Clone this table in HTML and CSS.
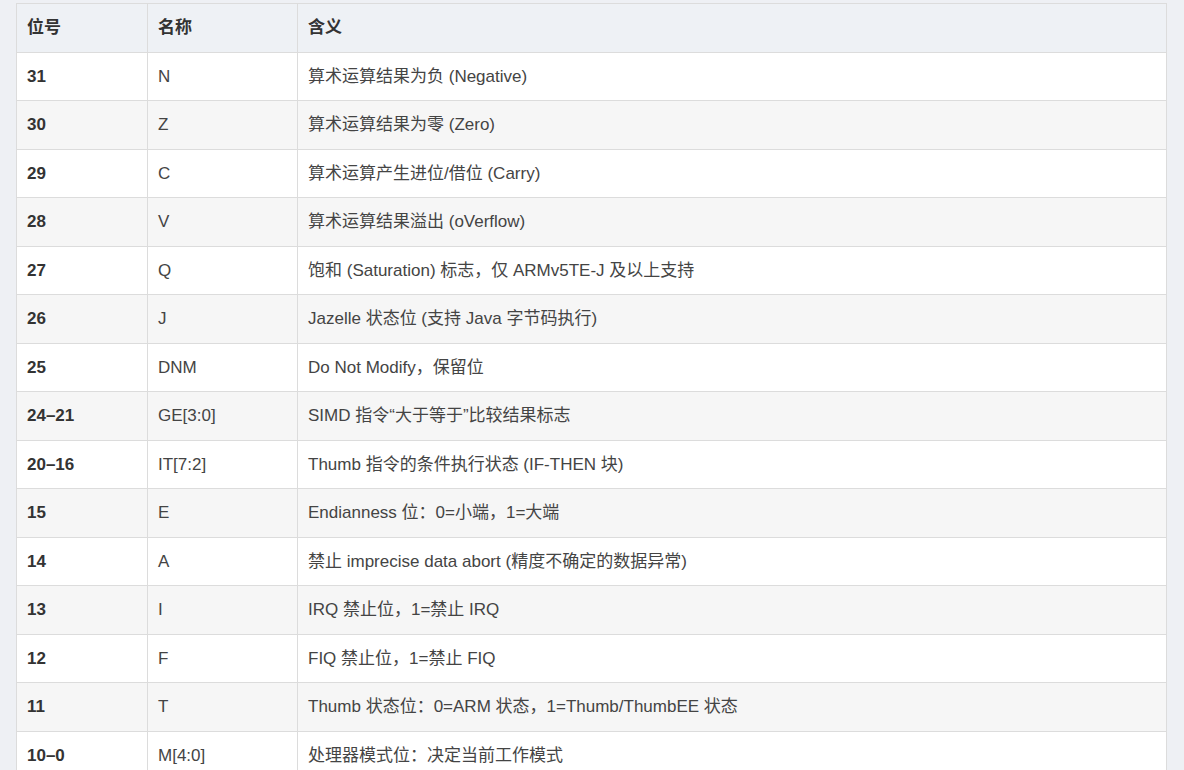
FILE: index.html
```html
<!DOCTYPE html>
<html lang="zh">
<head>
<meta charset="utf-8">
<link rel="stylesheet" href="styles.css">
</head>
<body>
<div class="wrap">
<table class="cpsr">
<thead>
<tr><th class="c1">位号</th><th class="c2">名称</th><th class="c3">含义</th></tr>
</thead>
<tbody>
<tr><td class="bit">31</td><td>N</td><td>算术运算结果为负 (Negative)</td></tr>
<tr><td class="bit">30</td><td>Z</td><td>算术运算结果为零 (Zero)</td></tr>
<tr><td class="bit">29</td><td>C</td><td>算术运算产生进位/借位 (Carry)</td></tr>
<tr><td class="bit">28</td><td>V</td><td>算术运算结果溢出 (oVerflow)</td></tr>
<tr><td class="bit">27</td><td>Q</td><td>饱和 (Saturation) 标志，仅 ARMv5TE-J 及以上支持</td></tr>
<tr><td class="bit">26</td><td>J</td><td>Jazelle 状态位 (支持 Java 字节码执行)</td></tr>
<tr><td class="bit">25</td><td>DNM</td><td>Do Not Modify，保留位</td></tr>
<tr><td class="bit">24–21</td><td>GE[3:0]</td><td>SIMD 指令“大于等于”比较结果标志</td></tr>
<tr><td class="bit">20–16</td><td>IT[7:2]</td><td>Thumb 指令的条件执行状态 (IF-THEN 块)</td></tr>
<tr><td class="bit">15</td><td>E</td><td>Endianness 位：0=小端，1=大端</td></tr>
<tr><td class="bit">14</td><td>A</td><td>禁止 imprecise data abort (精度不确定的数据异常)</td></tr>
<tr><td class="bit">13</td><td>I</td><td>IRQ 禁止位，1=禁止 IRQ</td></tr>
<tr><td class="bit">12</td><td>F</td><td>FIQ 禁止位，1=禁止 FIQ</td></tr>
<tr><td class="bit">11</td><td>T</td><td>Thumb 状态位：0=ARM 状态，1=Thumb/ThumbEE 状态</td></tr>
<tr><td class="bit">10–0</td><td>M[4:0]</td><td>处理器模式位：决定当前工作模式</td></tr>
</tbody>
</table>
</div>
</body>
</html>
```
FILE: styles.css
```css
html, body {
  margin: 0;
  padding: 0;
  background: #eef0f4;
}
body {
  font-family: "Liberation Sans", Arial, "Noto Sans CJK SC", sans-serif;
  font-size: 17px;
  color: #444;
}
.wrap {
  padding: 3px 17px 0 16px;
}
.cpsr {
  width: 100%;
  border-collapse: collapse;
  background: #fff;
  table-layout: fixed;
}
.cpsr th, .cpsr td {
  border: 1px solid #dcdcdc;
  padding: 11px 10px;
  line-height: 25.5px;
  text-align: left;
  vertical-align: middle;
}
.cpsr th {
  background: #eef1f5;
  font-weight: bold;
  color: #333;
}
.c1 { width: 110px; }
.c2 { width: 129px; }
.cpsr tbody tr:nth-child(even) td {
  background: #f6f6f6;
}
.cpsr td.bit {
  font-weight: bold;
  color: #333;
}
```
